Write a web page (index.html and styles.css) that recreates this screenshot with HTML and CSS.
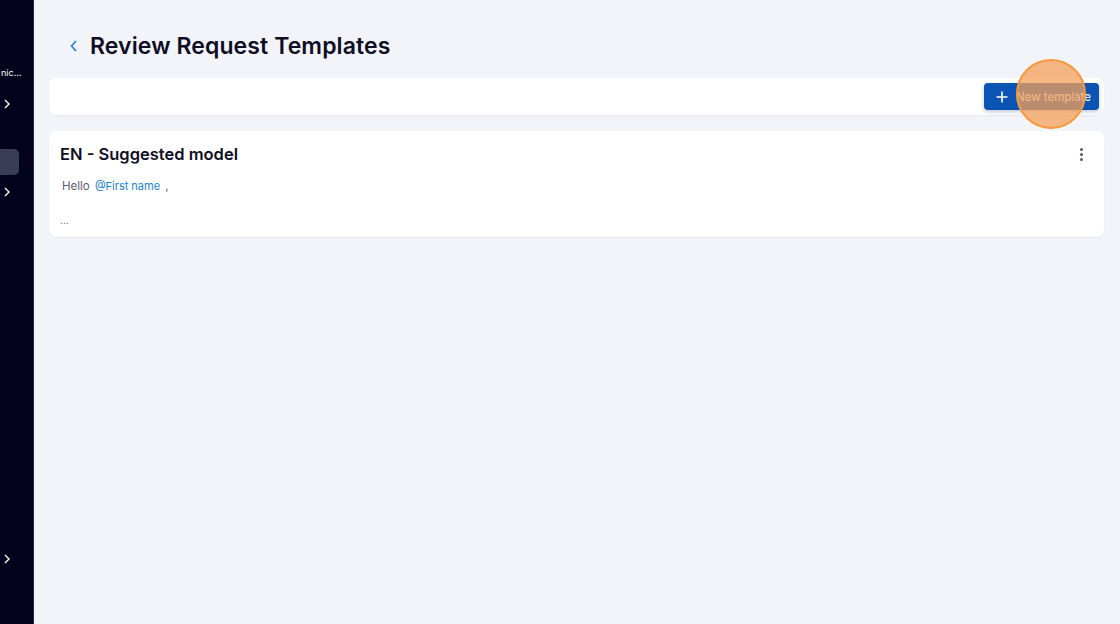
FILE: index.html
```html
<!DOCTYPE html>
<html lang="en">
<head>
	<meta charset="UTF-8">
	<title>Review Request Templates</title>
	<link rel="stylesheet" href="styles.css">
</head>
<body>
	<div class="layout">
		<aside class="sidebar">
			<div class="org">nic…</div>
			<div class="side-item arrow-1">
				<svg width="8" height="10" viewBox="0 0 8 10"><path d="M2 1l4 4-4 4" fill="none" stroke="#fff" stroke-width="1.4"/></svg>
			</div>
			<div class="side-active"></div>
			<div class="side-item arrow-2">
				<svg width="8" height="10" viewBox="0 0 8 10"><path d="M2 1l4 4-4 4" fill="none" stroke="#fff" stroke-width="1.4"/></svg>
			</div>
			<div class="side-spacer"></div>
			<div class="side-item arrow-3">
				<svg width="8" height="10" viewBox="0 0 8 10"><path d="M2 1l4 4-4 4" fill="none" stroke="#fff" stroke-width="1.4"/></svg>
			</div>
		</aside>
		<main class="main">
			<header class="page-head">
				<a class="back" href="">
					<svg width="10" height="14" viewBox="0 0 10 14"><path d="M7 2L2.5 7 7 12" fill="none" stroke="#1a7fd6" stroke-width="1.6"/></svg>
				</a>
				<h1>Review Request Templates</h1>
			</header>
			<div class="toolbar">
				<button class="btn-new">
					<svg width="12" height="12" viewBox="0 0 12 12"><path d="M6 0.5v11M0.5 6h11" stroke="#fff" stroke-width="1.6"/></svg>
					<span>New template</span>
				</button>
				<div class="click-mark"></div>
			</div>
			<section class="card">
				<div class="card-head">
					<h2>EN - Suggested model</h2>
					<span class="kebab"><i></i><i></i><i></i></span>
				</div>
				<p class="body-line">Hello <span class="tag">@First name</span> ,</p>
				<p class="more">...</p>
			</section>
		</main>
	</div>
</body>
</html>
```

FILE: styles.css
```css
* {
	margin: 0;
	padding: 0;
	box-sizing: border-box;
}
body {
	background-color: #f3f4f9;
	font-family: "Inter", "Noto Sans", sans-serif;
	color: #0e0e24;
}
.layout {
	display: flex;
	height: 624px;
}
.sidebar {
	width: 34px;
	flex-shrink: 0;
	background-color: #03031d;
	border-right: 1px solid #2a2c45;
	display: flex;
	flex-direction: column;
	overflow: hidden;
	padding-top: 66px;
}
.org {
	color: #fff;
	font-size: 9px;
	height: 14px;
	line-height: 14px;
	padding-left: 1px;
	white-space: nowrap;
}
.side-item {
	height: 16px;
	display: flex;
	align-items: center;
	padding-left: 3px;
}
.arrow-1 {
	margin-top: 16px;
}
.side-active {
	width: 19px;
	height: 26px;
	margin-top: 37px;
	background-color: #3a3d57;
	border-radius: 0 5px 5px 0;
}
.arrow-2 {
	margin-top: 9px;
}
.side-spacer {
	height: 351px;
}
.main {
	flex: 1;
	padding: 31px 16px 0 15px;
}
.page-head {
	display: flex;
	align-items: center;
	height: 30px;
	padding-left: 20px;
}
.back {
	display: flex;
	margin-right: 11px;
}
h1 {
	font-size: 23px;
	font-weight: 600;
	letter-spacing: 0.1px;
}
.toolbar {
	position: relative;
	margin-top: 17px;
	height: 37px;
	background-color: #fff;
	border-radius: 8px;
	box-shadow: 0 1px 2px rgba(20, 20, 60, 0.05);
	display: flex;
	justify-content: flex-end;
	align-items: center;
	padding-right: 5px;
}
.btn-new {
	height: 27px;
	width: 115px;
	border: none;
	border-radius: 4px;
	background-color: #0c54b4;
	color: #fff;
	display: flex;
	align-items: center;
	padding-left: 12px;
	gap: 8px;
	font-family: inherit;
	font-size: 11.5px;
	box-shadow: 0 2px 4px rgba(12, 40, 90, 0.25);
}
.click-mark {
	position: absolute;
	right: 18px;
	top: -19px;
	width: 70px;
	height: 70px;
	border-radius: 50%;
	border: 2.5px solid #f59a3c;
	background-color: rgba(246, 160, 90, 0.75);
}
.card {
	margin-top: 16px;
	background-color: #fff;
	border-radius: 8px;
	box-shadow: 0 1px 2px rgba(20, 20, 60, 0.05);
	padding: 12px 11px 12px 11px;
	height: 106px;
}
.card-head {
	display: flex;
	justify-content: space-between;
	align-items: center;
	height: 22px;
}
h2 {
	font-size: 16.5px;
	font-weight: 600;
}
.kebab {
	display: flex;
	flex-direction: column;
	gap: 2px;
	margin-right: 10px;
}
.kebab i {
	width: 3px;
	height: 3px;
	border-radius: 50%;
	background-color: #555a6a;
}
.body-line {
	margin-top: 14px;
	padding-left: 2px;
	font-size: 11.5px;
	color: #5b6070;
}
.tag {
	color: #1a7fd6;
	margin: 0 2px;
	font-size: 11px;
}
.more {
	margin-top: 21px;
	font-size: 10px;
	color: #5b6070;
}
```
